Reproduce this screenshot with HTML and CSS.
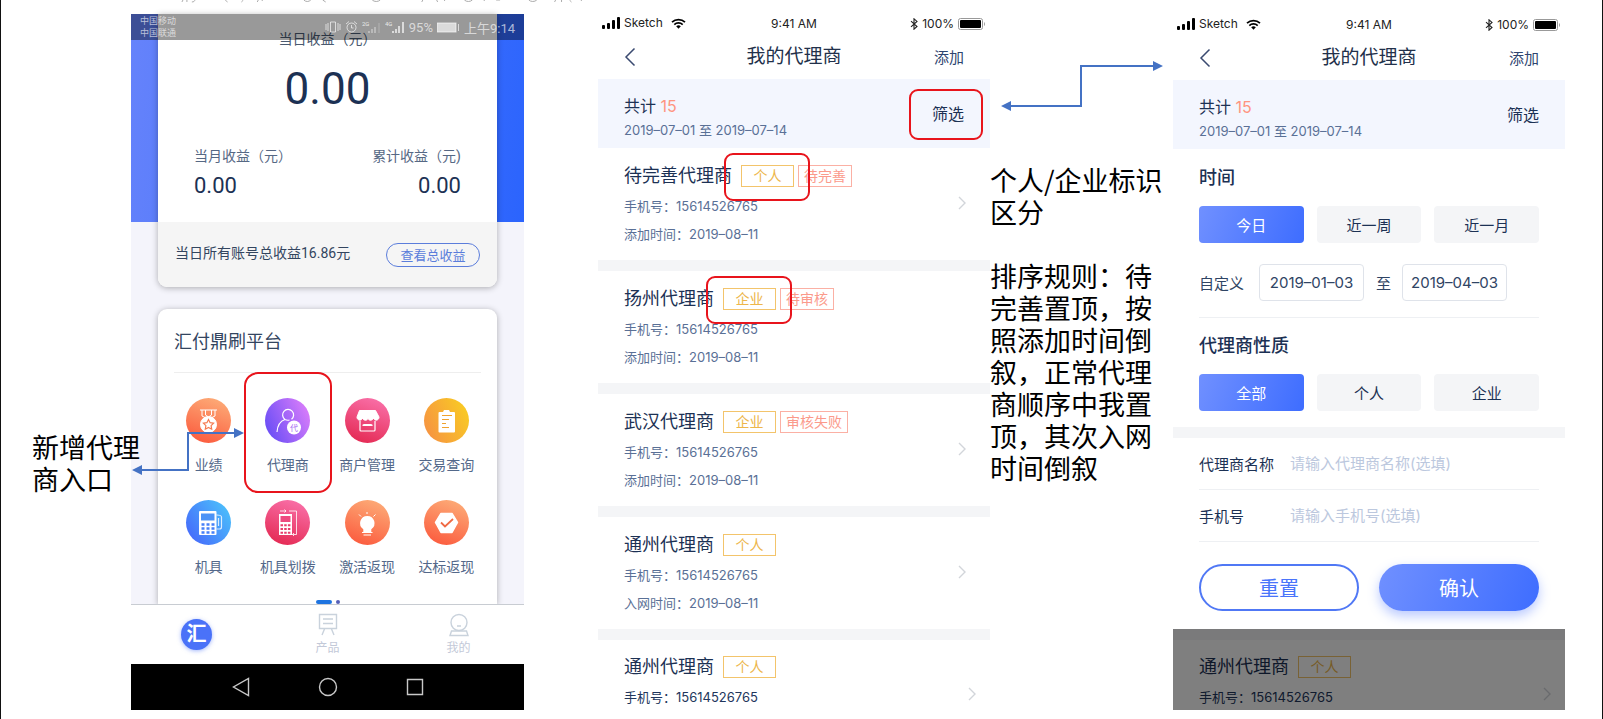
FILE: index.html
```html
<!DOCTYPE html>
<html lang="zh-CN">
<head>
    <meta charset="UTF-8">
    <meta name="viewport" content="width=device-width, initial-scale=1.0">
    <title>我的代理商</title>
    <link rel="stylesheet" href="styles.css">
</head>
<body>
    <svg class="defs" width="0" height="0" aria-hidden="true">
        <defs>
            <symbol id="signal" viewBox="0 0 18 12">
                <rect x="0" y="8" width="3" height="4" rx="1"/>
                <rect x="5" y="6" width="3" height="6" rx="1"/>
                <rect x="10" y="3" width="3" height="9" rx="1"/>
                <rect x="15" y="0" width="3" height="12" rx="1"/>
            </symbol>
            <symbol id="wifi" viewBox="0 0 15 11">
                <path d="M1 4.2a9.4 9.4 0 0 1 13 0M3.3 6.6a6.1 6.1 0 0 1 8.4 0" fill="none" stroke="#000" stroke-width="1.7"/>
                <path d="M5.2 8.3a3.4 3.4 0 0 1 4.6 0L7.5 10.8z"/>
            </symbol>
            <symbol id="bluetooth" viewBox="0 0 8 12">
                <path d="M1 3.2l6 5.3L4 11.2V.8l3 2.6L1 8.8" fill="none" stroke="#222" stroke-width="1.1"/>
            </symbol>
            <symbol id="battery" viewBox="0 0 28 12">
                <rect x=".5" y=".5" width="24" height="11" rx="2" fill="#fff" stroke="#999"/>
                <rect x="2" y="2" width="21" height="8" rx="1"/>
                <path d="M26 4v4c1.3-.5 1.3-3.5 0-4z" fill="#999"/>
            </symbol>
            <symbol id="back" viewBox="0 0 12 20">
                <path d="M10.5 1.5L2 10l8.5 8.5" fill="none" stroke="#3a4a70" stroke-width="1.5"/>
            </symbol>
            <symbol id="chevron" viewBox="0 0 8 14">
                <path d="M1 1l6 6-6 6" fill="none" stroke="#d2d5da" stroke-width="1.4"/>
            </symbol>
        </defs>
    </svg>

    <svg class="page-trim" viewBox="0 0 420 3" preserveAspectRatio="xMinYMin meet" aria-hidden="true">
        <path d="M6 0l-1 2M10 0v2M18 0c0 1-1 2-3 2M49 0c0 1 1 1 2 2M67 0l-2 2M82 0l-1 2M86 0v1M128 0c2 2 5 2 7 0M147 0l3 2M197 0c2 2 6 2 8 0M248 0l-1 2M262 0l1 2M270 0v1M290 0c2 2 6 2 8 0M310 0v1M322 0h4M355 0c2 2 6 2 8 0M382 0l-1 2M388 0v2M396 0l2 2M408 0v1"/>
    </svg>

    <main class="board">
        <aside class="note note-entry">新增代理商入口</aside>

        <section class="home">
            <div class="android-status">
                <div class="carriers"><span>中国移动</span><span>中国联通</span></div>
                <div class="android-icons">
                    <svg width="16" height="12" viewBox="0 0 16 12"><path d="M1 3v6M3 2v8M13 2v8M15 3v6M5.5 1h5v10h-5z"/></svg>
                    <svg width="13" height="12" viewBox="0 0 13 12"><circle cx="6.5" cy="6.5" r="4.5"/><path d="M6.5 4v3h2M1 3l3-2.5M12 3L9 .5"/></svg>
                    <svg width="19" height="12" viewBox="0 0 19 12"><text x="0" y="5">2G</text><path d="M7 10v2M10 8v4M13 6v6"/><path class="weak" d="M17 2v10"/></svg>
                    <svg width="20" height="12" viewBox="0 0 20 12"><text x="0" y="5">4G</text><path d="M8 10v2M11 8v4M14 5v7M18 1v11" stroke-width="2"/></svg>
                    <span>95%</span>
                    <svg width="23" height="11" viewBox="0 0 23 11"><rect class="solid" x="0" y="1" width="19" height="9"/><path d="M21.5 2v7"/></svg>
                    <span>上午9:14</span>
                </div>
            </div>

            <div class="home-scroll">
                <div class="card income">
                    <div class="income-top">
                        <p class="income-label today">当日收益（元）</p>
                        <p class="income-total">0.00</p>
                        <div class="income-row">
                            <div>
                                <p class="income-label">当月收益（元）</p>
                                <p class="income-value">0.00</p>
                            </div>
                            <div class="income-right">
                                <p class="income-label">累计收益（元)</p>
                                <p class="income-value">0.00</p>
                            </div>
                        </div>
                    </div>
                    <div class="income-foot">
                        <span>当日所有账号总收益16.86元</span>
                        <button type="button" class="outline-button">查看总收益</button>
                    </div>
                </div>

                <div class="card platform">
                    <h2>汇付鼎刷平台</h2>
                    <div class="entries">
                        <a href="#" class="entry">
                            <svg class="disc orange" viewBox="0 0 45 45" fill="none" stroke="#fff">
                                <path d="M14 12h17M16 12v6l4 2M29 12v6l-4 2M19.5 12v5l3 2 3-2v-5"/>
                                <circle cx="22.5" cy="26.5" r="8" fill="#fff"/>
                                <path d="M22.5 21.5l1.6 3.2 3.5.5-2.5 2.5.6 3.5-3.2-1.7-3.2 1.7.6-3.5-2.5-2.5 3.5-.5z" stroke="#f57a50" stroke-width="1.2"/>
                            </svg>
                            <span>业绩</span>
                        </a>
                        <a href="#" class="entry">
                            <svg class="disc purple" viewBox="0 0 45 45" fill="none" stroke="#fff" stroke-width="1.2">
                                <path d="M20 21.5a5.5 5.5 0 1 1 6.5-.2M20 21.5c-4.5 1.500-7.5 6-8 12.500M20 21.500c1.500.8 3 .9 4.500.5"/>
                                <circle cx="29" cy="29.500" r="7" fill="#fff" stroke="none"/>
                                <text x="25" y="33" fill="#a76bf3" stroke="none">代</text>
                            </svg>
                            <span>代理商</span>
                            <i class="mark mark-entry"></i>
                            <svg class="link-arrow" width="112" height="48" viewBox="0 0 112 48">
                                <path d="M8 42h48V5h48" fill="none" stroke="#4472c4" stroke-width="2"/>
                                <path d="M0 42l10-5v10zM112 5l-10-5v10z" fill="#4472c4"/>
                            </svg>
                        </a>
                        <a href="#" class="entry">
                            <svg class="disc pink" viewBox="0 0 45 45" fill="none" stroke="#fff">
                                <path d="M14.500 12.500h16l3.500 6.500c0 4-5 4-5.500 1-1 3-5 3-5.500 0-.5 3-4.500 3-5.500 0-.5 3-5.500 3-5.500-1z" fill="#fff"/>
                                <path d="M15 23v9q0 1 1 1h13q1 0 1-1v-9M17.500 27.500l1.500-1h7l1.500 1M17.500 27.500h10" stroke-width="1.200"/>
                            </svg>
                            <span>商户管理</span>
                        </a>
                        <a href="#" class="entry">
                            <svg class="disc yellow" viewBox="0 0 45 45">
                                <path d="M14.500 15q0-1 1-1h3.500l1-2h5l1 2h4q1 0 1 1v18.500q0 1-1 1h-14.500q-1 0-1-1z" fill="#fff"/>
                                <path d="M18 17.500h10M18 21.500h7M18 25.500h4M18 29.500h7" stroke="#f0a22e" stroke-width="1.200"/>
                            </svg>
                            <span>交易查询</span>
                        </a>
                        <a href="#" class="entry">
                            <svg class="disc blue" viewBox="0 0 45 45" fill="none" stroke="#fff">
                                <path d="M30.500 15c3 0 5 0 5 2v10q0 2-2 2h-3M32.500 18v8" stroke-width="1.200" opacity=".8"/>
                                <path d="M14 11h15.500q1 0 1 1v22q0 1-1 1h-15.500q-1 0-1-1v-22q0-1 1-1z" fill="#fff" stroke="none"/>
                                <path d="M15 13.500h13.500v7h-13.500z" fill="#4c93f6" stroke="none"/>
                                <path d="M15.500 24.500h13M15.500 28.500h13M15.500 32.500h13" stroke="#4580f8" stroke-width="2.500" stroke-dasharray="3 2"/>
                            </svg>
                            <span>机具</span>
                        </a>
                        <a href="#" class="entry">
                            <svg class="disc pink" viewBox="0 0 45 45" fill="none" stroke="#fff">
                                <path d="M15 11h6l-1.500-1.500M21 11l-1.500 1.500M24 11h7.500v23.500h-4l1.500-1.500M27.500 34.500l1.500 1.500" opacity=".8"/>
                                <path d="M14 14h13v21h-13z" fill="#fff" stroke="none"/>
                                <path d="M15.500 16h10v6h-10z" fill="#ee4b80" stroke="none"/>
                                <path d="M15.500 25.200h10M15.500 29h10M15.500 32.700h10" stroke="#e83d6c" stroke-width="2" stroke-dasharray="2.500 1.200"/>
                            </svg>
                            <span>机具划拨</span>
                        </a>
                        <a href="#" class="entry">
                            <svg class="disc orange" viewBox="0 0 45 45" fill="none" stroke="#fff">
                                <path d="M22 12v2M14 14.500l2 2M30.500 14.500l-2 2"/>
                                <path d="M22.300 16a7.200 7.200 0 0 1 4 13.200v2.800h-8v-2.800a7.200 7.200 0 0 1 4-13.200z" fill="#fff" stroke="none"/>
                                <path d="M17 32.500h10.500M18.500 35h7.500" stroke-width="1.200"/>
                            </svg>
                            <span>激活返现</span>
                        </a>
                        <a href="#" class="entry">
                            <svg class="disc orange" viewBox="0 0 45 45">
                                <path d="M17 13.500h11l5.500 9-5.500 10h-11l-5.500-10z" fill="#fff" stroke="#fff" stroke-width="1.500" stroke-linejoin="round"/>
                                <path d="M17 22.500l4 4 8-7.500" fill="none" stroke="#ef6a44" stroke-width="1.800"/>
                            </svg>
                            <span>达标返现</span>
                        </a>
                    </div>
                    <div class="pager"><i class="current"></i><i></i></div>
                </div>
            </div>

            <nav class="tabbar">
                <a href="#" class="tab"><span class="tab-logo">汇</span></a>
                <a href="#" class="tab">
                    <svg width="20" height="24" viewBox="0 0 20 24"><path d="M1.500 1.500h17v14h-17zM5 6h10M5 10.500h10M6.500 16l-2.500 6M13.500 16l2.500 6"/></svg>
                    <span>产品</span>
                </a>
                <a href="#" class="tab">
                    <svg width="20" height="24" viewBox="0 0 20 24"><circle cx="10" cy="9.500" r="8"/><path d="M8 13h4M2.500 18h15l1.500 4.500h-18z"/></svg>
                    <span>我的</span>
                </a>
            </nav>
            <div class="android-nav">
                <svg width="18" height="20" viewBox="0 0 18 20"><path d="M16.500 1.500v17l-15-8.500z"/></svg>
                <svg width="20" height="20" viewBox="0 0 20 20"><circle cx="10" cy="10" r="8.500"/></svg>
                <svg width="18" height="18" viewBox="0 0 18 18"><path d="M1.500 1.500h15v15h-15z"/></svg>
            </div>
        </section>

        <section class="phone phone-list">
            <div class="ios-status">
                <div class="status-left">
                    <svg width="18" height="12"><use href="#signal"/></svg>
                    <span>Sketch</span>
                    <svg class="wifi" width="15" height="11"><use href="#wifi"/></svg>
                </div>
                <span class="clock">9:41 AM</span>
                <div class="status-right">
                    <svg width="8" height="12"><use href="#bluetooth"/></svg>
                    <span>100%</span>
                    <svg width="28" height="12"><use href="#battery"/></svg>
                </div>
            </div>
            <header class="navbar">
                <button type="button" class="back" aria-label="返回"><svg width="12" height="20"><use href="#back"/></svg></button>
                <h1>我的代理商</h1>
                <button type="button" class="add">添加</button>
            </header>
            <div class="summary">
                <div>
                    <p class="total">共计 <b>15</b></p>
                    <p class="range">2019–07–01 至 2019–07–14</p>
                </div>
                <button type="button" class="filter">筛选<i class="mark mark-filter"></i></button>
            </div>
            <ul class="agents">
                <li class="agent">
                    <div>
                        <h3>待完善代理商 <span class="tag marked">个人</span><span class="tag warn">待完善</span></h3>
                        <p>手机号：15614526765</p>
                        <p>添加时间：2019–08–11</p>
                    </div>
                    <svg class="chevron" width="8" height="14"><use href="#chevron"/></svg>
                </li>
                <li class="agent">
                    <div>
                        <h3>扬州代理商 <span class="tag marked">企业</span><span class="tag warn">待审核</span></h3>
                        <p>手机号：15614526765</p>
                        <p>添加时间：2019–08–11</p>
                    </div>
                </li>
                <li class="agent">
                    <div>
                        <h3>武汉代理商 <span class="tag">企业</span><span class="tag warn">审核失败</span></h3>
                        <p>手机号：15614526765</p>
                        <p>添加时间：2019–08–11</p>
                    </div>
                    <svg class="chevron" width="8" height="14"><use href="#chevron"/></svg>
                </li>
                <li class="agent">
                    <div>
                        <h3>通州代理商 <span class="tag">个人</span></h3>
                        <p>手机号：15614526765</p>
                        <p>入网时间：2019–08–11</p>
                    </div>
                    <svg class="chevron" width="8" height="14"><use href="#chevron"/></svg>
                </li>
                <li class="agent partial">
                    <div>
                        <h3>通州代理商 <span class="tag">个人</span></h3>
                        <p>手机号：15614526765</p>
                    </div>
                    <svg class="chevron" width="8" height="14"><use href="#chevron"/></svg>
                </li>
            </ul>
        </section>

        <aside class="note note-rules">
            <svg viewBox="0 0 183 50">
                <path d="M18 45h73V5h73" fill="none" stroke="#4472c4" stroke-width="2"/>
                <path d="M11 45l10-5v10zM173 5l-10-5v10z" fill="#4472c4"/>
            </svg>
            <p>个人/企业标识区分</p>
            <p>排序规则：待完善置顶，按照添加时间倒叙，正常代理商顺序中我置顶，其次入网时间倒叙</p>
        </aside>

        <section class="phone phone-filter">
            <div class="ios-status">
                <div class="status-left">
                    <svg width="18" height="12"><use href="#signal"/></svg>
                    <span>Sketch</span>
                    <svg class="wifi" width="15" height="11"><use href="#wifi"/></svg>
                </div>
                <span class="clock">9:41 AM</span>
                <div class="status-right">
                    <svg width="8" height="12"><use href="#bluetooth"/></svg>
                    <span>100%</span>
                    <svg width="28" height="12"><use href="#battery"/></svg>
                </div>
            </div>
            <header class="navbar">
                <button type="button" class="back" aria-label="返回"><svg width="12" height="20"><use href="#back"/></svg></button>
                <h1>我的代理商</h1>
                <button type="button" class="add">添加</button>
            </header>
            <div class="summary">
                <div>
                    <p class="total">共计 <b>15</b></p>
                    <p class="range">2019–07–01 至 2019–07–14</p>
                </div>
                <button type="button" class="filter">筛选</button>
            </div>
            <form class="filter-form">
                <div class="filter-block">
                    <h2>时间</h2>
                    <div class="options">
                        <button type="button" class="option selected">今日</button>
                        <button type="button" class="option">近一周</button>
                        <button type="button" class="option">近一月</button>
                    </div>
                    <div class="custom">
                        <label for="date-from">自定义</label>
                        <input type="text" id="date-from" value="2019–01–03">
                        <label for="date-to">至</label>
                        <input type="text" id="date-to" value="2019–04–03">
                    </div>
                    <h2 class="divided">代理商性质</h2>
                    <div class="options">
                        <button type="button" class="option selected">全部</button>
                        <button type="button" class="option">个人</button>
                        <button type="button" class="option">企业</button>
                    </div>
                </div>
                <div class="fields">
                    <div class="field">
                        <label for="agent-name">代理商名称</label>
                        <input type="text" id="agent-name" placeholder="请输入代理商名称(选填)">
                    </div>
                    <div class="field">
                        <label for="agent-phone">手机号</label>
                        <input type="text" id="agent-phone" placeholder="请输入手机号(选填)">
                    </div>
                </div>
                <div class="actions">
                    <button type="reset" class="reset">重置</button>
                    <button type="submit" class="confirm">确认</button>
                </div>
            </form>
            <div class="dimmed">
                <div class="agent partial">
                    <div>
                        <h3>通州代理商 <span class="tag">个人</span></h3>
                        <p>手机号：15614526765</p>
                    </div>
                    <svg class="chevron" width="8" height="14"><use href="#chevron"/></svg>
                </div>
            </div>
        </section>
    </main>
</body>
</html>
```

FILE: styles.css
```css
* {
    box-sizing: border-box;
}
body {
    margin: 0;
    min-height: 100vh;
    border-left: 1px solid #111;
    border-right: 1px solid #111;
    background-color: #fff;
    color: #1c3154;
    font-family: Inter, "Noto Sans CJK SC", sans-serif;
    font-size: 14px;
}
h1, h2, h3, p, ul {
    margin: 0;
    padding: 0;
    font-weight: normal;
}
a {
    color: inherit;
    text-decoration: none;
}
button, input {
    margin: 0;
    padding: 0;
    border: none;
    background: none;
    color: inherit;
    font-family: inherit;
}
button {
    cursor: pointer;
}
svg {
    display: block;
    flex: none;
}
.defs {
    position: absolute;
}
.page-trim {
    width: 26%;
    height: 3px;
    margin-left: 11%;
    fill: none;
    stroke: #aaa;
}
.board {
    display: grid;
    grid-template-columns: 130fr 393fr 74fr 392fr 183fr 392fr 37fr;
    align-items: start;
    padding-top: 11px;
}
.phone-list {
    grid-column: 4;
}

/* notes around the screens */
.note {
    color: #000;
    font-size: 27px;
    line-height: 32px;
    font-family: "Noto Sans CJK SC", sans-serif;
}
.note-entry {
    position: relative;
    z-index: 3;
    margin-right: -20px;
    padding: 417px 0 0 31px;
}
.note-rules {
    padding-top: 47px;
}
.note-rules svg {
    width: 100%;
    margin-bottom: 53px;
}
.note-rules p {
    margin-bottom: 32px;
}
.note-rules p:last-child {
    margin-bottom: 0;
}
.mark {
    position: absolute;
    z-index: 2;
    border: 2px solid #e8141c;
    border-radius: 9px;
    pointer-events: none;
}
.mark-entry {
    inset: -26px -4px -18px;
    border-radius: 14px;
}
.mark-filter {
    inset: -13px -19px -14px -23px;
}
.link-arrow {
    position: absolute;
    z-index: 2;
    right: 84px;
    top: 30px;
}

/* home screen */
.home {
    position: relative;
    font-family: Roboto, "Noto Sans CJK SC", sans-serif;
    background-color: #f4f4fb;
    background-image: linear-gradient(100deg, #6683fb, #2b64fd);
    background-size: 100% 208px;
    background-repeat: no-repeat;
}
.android-status {
    position: absolute;
    z-index: 2;
    top: 0;
    left: 0;
    right: 0;
    height: 26px;
    padding: 0 9px;
    display: flex;
    justify-content: space-between;
    align-items: center;
    background-color: rgba(0, 0, 0, 0.4);
    color: rgba(255, 255, 255, 0.65);
}
.carriers {
    display: flex;
    flex-direction: column;
    font-size: 9px;
    line-height: 12px;
}
.android-icons {
    display: flex;
    align-items: center;
    gap: 4px;
    font-size: 13px;
}
.android-icons svg {
    fill: none;
    stroke: rgba(255, 255, 255, 0.65);
}
.android-icons .solid {
    fill: rgba(255, 255, 255, 0.65);
}
.android-icons .weak {
    opacity: 0.4;
}
.android-icons text {
    fill: rgba(255, 255, 255, 0.8);
    stroke: none;
    font-size: 6px;
}
.home-scroll {
    padding: 0 27px;
}
.card {
    background-color: #fff;
    box-shadow: 0 1px 6px rgba(0, 0, 0, 0.3);
    overflow: hidden;
}
.income {
    border-radius: 0 0 9px 9px;
    margin-bottom: 22px;
}
.income-top {
    height: 208px;
    padding: 15px 36px 0;
}
.income-label {
    color: #566884;
    line-height: 20px;
}
.today {
    color: #4a5a70;
    text-align: center;
}
.income-total {
    margin: 14px 0 31px;
    text-align: center;
    font-size: 44px;
    line-height: 52px;
}
.income-row {
    display: flex;
    justify-content: space-between;
}
.income-right {
    text-align: right;
}
.income-value {
    margin-top: 7px;
    font-size: 22px;
    line-height: 26px;
}
.income-foot {
    height: 65px;
    padding: 0 17px;
    display: flex;
    justify-content: space-between;
    align-items: center;
    background-color: #f5f5f5;
    color: #33455f;
}
.income-foot span {
    padding-bottom: 5px;
}
.outline-button {
    width: 94px;
    height: 24px;
    border: 1px solid #5b7ddb;
    border-radius: 12px;
    color: #5b7ddb;
    font-size: 13px;
}
.platform {
    padding-top: 20px;
    border-radius: 9px 9px 0 0;
    overflow: visible;
}
.platform h2 {
    margin: 0 16px;
    padding-bottom: 18px;
    border-bottom: 1px solid #eee;
    color: #33455f;
    font-size: 18px;
    line-height: 25px;
}
.entries {
    display: grid;
    grid-template-columns: repeat(4, 1fr);
    row-gap: 25px;
    padding: 25px 11px 23px;
}
.entry {
    position: relative;
    display: flex;
    flex-direction: column;
    align-items: center;
    gap: 12px;
    color: #53688a;
    line-height: 20px;
}
.disc {
    width: 45px;
    height: 45px;
    border-radius: 50%;
}
.disc text {
    font-size: 8px;
}
.orange {
    background: linear-gradient(200deg, #fdb27c, #fb5439);
}
.purple {
    background: linear-gradient(245deg, #e682fb, #5c48f5);
}
.pink {
    background: linear-gradient(200deg, #fb76b0, #e2234b);
}
.yellow {
    background: linear-gradient(245deg, #f9d120, #f68d45);
}
.blue {
    background: linear-gradient(235deg, #4cc9fb, #4560fb);
}
.pager {
    display: flex;
    justify-content: center;
    gap: 4px;
}
.pager i {
    width: 4px;
    height: 4px;
    border-radius: 2px;
    background-color: #5560b8;
}
.pager .current {
    width: 16px;
    background-color: #1e74e0;
}
.tabbar {
    position: relative;
    height: 60px;
    display: grid;
    grid-template-columns: repeat(3, 1fr);
    border-top: 1px solid #c8ccd2;
    background-color: #fff;
}
.tab {
    display: flex;
    flex-direction: column;
    align-items: center;
    justify-content: center;
    gap: 2px;
    color: #c3c9d8;
    font-size: 12px;
    line-height: 18px;
}
.tab svg {
    fill: none;
    stroke: #c9d2dc;
    stroke-width: 1.4;
}
.tab-logo {
    width: 31px;
    height: 31px;
    border-radius: 50%;
    background-color: #4a72f8;
    box-shadow: 0 1px 4px rgba(74, 114, 248, 0.5);
    color: #fff;
    font-size: 20px;
    font-weight: bold;
    line-height: 30px;
    text-align: center;
}
.android-nav {
    height: 46px;
    display: flex;
    justify-content: center;
    align-items: center;
    gap: 68px;
    background-color: #000;
}
.android-nav svg {
    fill: none;
    stroke: #c8c8c8;
    stroke-width: 1.4;
}

/* agent screens */
.phone {
    background-color: #fff;
}
.phone-filter {
    margin-top: 1px;
}
.ios-status {
    height: 20px;
    padding: 0 4px;
    display: grid;
    grid-template-columns: 1fr auto 1fr;
    align-items: center;
    color: #222;
    font-size: 12px;
    line-height: 16px;
}
.status-left,
.status-right {
    display: flex;
    align-items: center;
    gap: 4px;
}
.status-left {
    padding-bottom: 2px;
}
.status-right {
    justify-content: flex-end;
}
.wifi {
    margin-left: 4px;
}
.navbar {
    height: 45px;
    padding: 0 26px;
    display: grid;
    grid-template-columns: 1fr auto 1fr;
    align-items: center;
}
.back {
    justify-self: start;
}
.navbar h1 {
    color: #22304a;
    font-size: 19px;
    line-height: 28px;
}
.add {
    justify-self: end;
    color: #2f4570;
    font-size: 15px;
}
.summary {
    height: 69px;
    padding: 16px 26px 8px;
    display: flex;
    justify-content: space-between;
    background-color: #f3f6fe;
}
.total {
    font-size: 16px;
    line-height: 22px;
}
.total b {
    color: #ff9580;
    font-weight: normal;
}
.range {
    margin-top: 3px;
    color: #5a7096;
    font-size: 13px;
    line-height: 20px;
}
.filter {
    position: relative;
    align-self: center;
    height: 24px;
    margin-bottom: 8px;
    font-size: 16px;
    line-height: 24px;
}
.agents {
    list-style: none;
}
.agent {
    height: 123px;
    padding: 17px 24px 0 26px;
    display: flex;
    justify-content: space-between;
    border-bottom: 11px solid #f4f5f7;
}
.agent h3 {
    display: flex;
    align-items: center;
    height: 22px;
    margin-bottom: 9px;
    font-size: 18px;
    line-height: 22px;
}
.agent p {
    margin-bottom: 8px;
    color: #5a7096;
    font-size: 13px;
    line-height: 20px;
}
.tag {
    position: relative;
    min-width: 53px;
    height: 22px;
    margin-left: 4px;
    padding: 0 5px;
    border: 1px solid #f3c46b;
    color: #edb64a;
    font-size: 14px;
    line-height: 20px;
    text-align: center;
}
.tag:first-child {
    margin-left: 9px;
}
.warn {
    border-color: #fbb0a4;
    color: #fb9a8b;
}
.marked::after {
    content: "";
    position: absolute;
    z-index: 2;
    inset: -13px -17px -15px -18px;
    border: 2px solid #e8141c;
    border-radius: 9px;
}
.chevron {
    margin-top: 31px;
}
.partial {
    height: auto;
    padding: 16px 14px 0 26px;
    border-bottom: none;
}
.partial p {
    margin-bottom: 0;
    color: #22365c;
}

/* filter panel */
.filter-block {
    padding: 17px 26px 16px;
    border-bottom: 11px solid #f4f5f7;
}
.filter-form h2 {
    margin-bottom: 16px;
    font-size: 18px;
    font-weight: 500;
    line-height: 24px;
}
.options {
    display: grid;
    grid-template-columns: repeat(3, 1fr);
    gap: 13px;
}
.option {
    height: 37px;
    border-radius: 4px;
    background-color: #f4f5f7;
    font-size: 15px;
}
.selected {
    background: linear-gradient(110deg, #7090ff, #3e6dff);
    color: #fff;
}
.custom {
    margin: 21px 0 16px;
    display: flex;
    align-items: center;
    color: #2f4464;
    font-size: 15px;
}
.custom input {
    flex: 0 1 105px;
    min-width: 0;
    height: 37px;
    margin-left: 15px;
    border: 1px solid #dfe3ea;
    border-radius: 4px;
    font-size: 15px;
    text-align: center;
}
.custom input + label {
    margin-left: 12px;
}
.custom label + input:last-child {
    margin-left: 11px;
}
.filter-form .divided {
    padding-top: 16px;
    border-top: 1px solid #eef0f3;
}
.fields {
    padding: 0 26px;
}
.field {
    height: 52px;
    display: flex;
    align-items: center;
    border-bottom: 1px solid #eef0f3;
    font-size: 15px;
}
.field label {
    width: 91px;
}
.field input {
    flex: 1;
    min-width: 0;
    font-size: 15px;
}
.field input::placeholder {
    color: #bcc8de;
}
.actions {
    padding: 22px 26px 18px;
    display: grid;
    grid-template-columns: 1fr 1fr;
    gap: 20px;
}
.actions button {
    height: 47px;
    border-radius: 24px;
    font-size: 20px;
}
.actions .reset {
    border: 2px solid #5078f5;
    color: #4a74fb;
}
.confirm {
    background: linear-gradient(110deg, #7090ff, #3e6dff);
    box-shadow: 0 5px 12px rgba(80, 120, 255, 0.4);
    color: #fff;
}
.dimmed {
    position: relative;
    padding-bottom: 3px;
    border-top: 11px solid #f4f5f7;
}
.dimmed::after {
    content: "";
    position: absolute;
    inset: -11px 0 0;
    background-color: rgba(0, 0, 0, 0.5);
}
```
